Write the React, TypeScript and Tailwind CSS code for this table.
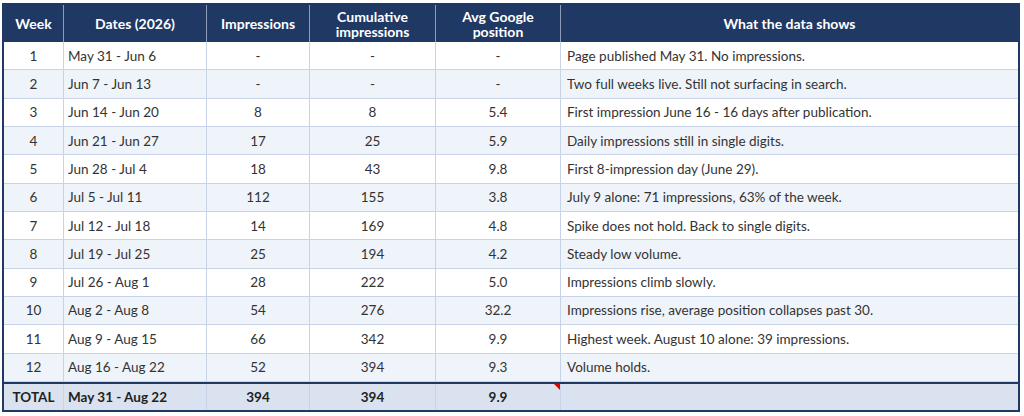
import React from 'react';

type Row = {
  week: string;
  dates: string;
  imp: string;
  cum: string;
  pos: string;
  note: string;
};

const rows: Row[] = [
  { week: '1', dates: 'May 31 - Jun 6', imp: '-', cum: '-', pos: '-', note: 'Page published May 31. No impressions.' },
  { week: '2', dates: 'Jun 7 - Jun 13', imp: '-', cum: '-', pos: '-', note: 'Two full weeks live. Still not surfacing in search.' },
  { week: '3', dates: 'Jun 14 - Jun 20', imp: '8', cum: '8', pos: '5.4', note: 'First impression June 16 - 16 days after publication.' },
  { week: '4', dates: 'Jun 21 - Jun 27', imp: '17', cum: '25', pos: '5.9', note: 'Daily impressions still in single digits.' },
  { week: '5', dates: 'Jun 28 - Jul 4', imp: '18', cum: '43', pos: '9.8', note: 'First 8-impression day (June 29).' },
  { week: '6', dates: 'Jul 5 - Jul 11', imp: '112', cum: '155', pos: '3.8', note: 'July 9 alone: 71 impressions, 63% of the week.' },
  { week: '7', dates: 'Jul 12 - Jul 18', imp: '14', cum: '169', pos: '4.8', note: 'Spike does not hold. Back to single digits.' },
  { week: '8', dates: 'Jul 19 - Jul 25', imp: '25', cum: '194', pos: '4.2', note: 'Steady low volume.' },
  { week: '9', dates: 'Jul 26 - Aug 1', imp: '28', cum: '222', pos: '5.0', note: 'Impressions climb slowly.' },
  { week: '10', dates: 'Aug 2 - Aug 8', imp: '54', cum: '276', pos: '32.2', note: 'Impressions rise, average position collapses past 30.' },
  { week: '11', dates: 'Aug 9 - Aug 15', imp: '66', cum: '342', pos: '9.9', note: 'Highest week. August 10 alone: 39 impressions.' },
  { week: '12', dates: 'Aug 16 - Aug 22', imp: '52', cum: '394', pos: '9.3', note: 'Volume holds.' },
];

const cols = 'grid grid-cols-[60px_143px_103px_126px_125px_1fr]';

export default function App() {
  return (
    <div className="w-[1024px] h-[416px] bg-white pt-[3px] pl-[2px] font-['Lato','Noto_Sans',sans-serif] text-[13.5px] text-[#333]">
      <div className="w-[1018px] border-2 border-[#1f3864]">
        {/* Header */}
        <div className={`${cols} h-[37px] bg-[#1f3864] text-white text-[14px] font-bold leading-[15px]`}>
          <div className="flex items-center justify-center border-r border-[#8e9cb8]">Week</div>
          <div className="flex items-center justify-center border-r border-[#8e9cb8]">Dates (2026)</div>
          <div className="flex items-center justify-center border-r border-[#8e9cb8]">Impressions</div>
          <div className="flex items-center justify-center text-center border-r border-[#8e9cb8]">Cumulative<br />impressions</div>
          <div className="flex items-center justify-center text-center border-r border-[#8e9cb8]">Avg Google<br />position</div>
          <div className="flex items-center justify-center">What the data shows</div>
        </div>

        {/* Body */}
        {rows.map((r, i) => (
          <div
            key={r.week}
            className={`${cols} h-[28.33px] border-b border-[#c9d3e8] last:border-b-0 ${i % 2 === 1 ? 'bg-[#eff3fa]' : 'bg-white'}`}
          >
            <div className="flex items-center justify-center border-r border-[#c9d3e8]">{r.week}</div>
            <div className="flex items-center px-[4px] border-r border-[#c9d3e8]">{r.dates}</div>
            <div className="flex items-center justify-center border-r border-[#c9d3e8]">{r.imp}</div>
            <div className="flex items-center justify-center border-r border-[#c9d3e8]">{r.cum}</div>
            <div className="flex items-center justify-center border-r border-[#c9d3e8]">{r.pos}</div>
            <div className="flex items-center px-[6px]">{r.note}</div>
          </div>
        ))}

        {/* Total */}
        <div className={`${cols} h-[28px] border-t-2 border-[#1f3864] bg-[#dbe2ef] font-bold text-[#222]`}>
          <div className="flex items-center justify-center border-r border-[#c9d3e8]">TOTAL</div>
          <div className="flex items-center px-[4px] border-r border-[#c9d3e8]">May 31 - Aug 22</div>
          <div className="flex items-center justify-center border-r border-[#c9d3e8]">394</div>
          <div className="flex items-center justify-center border-r border-[#c9d3e8]">394</div>
          <div className="relative flex items-center justify-center border-r border-[#c9d3e8]">
            9.9
            <span className="absolute top-0 right-0 w-0 h-0 border-t-[6px] border-l-[6px] border-t-[#e00000] border-l-transparent" />
          </div>
          <div />
        </div>
      </div>
    </div>
  );
}
